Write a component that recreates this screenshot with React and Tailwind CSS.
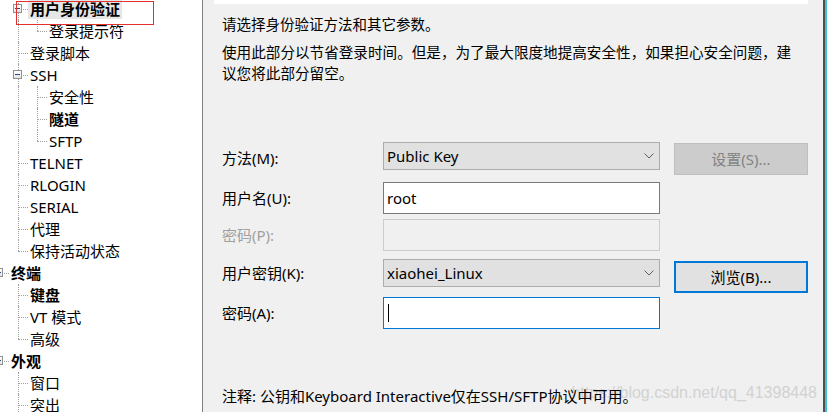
import React from "react";

const TREE = [
  { level: 1, text: "用户身份验证", bold: true, sel: true, exp: true, guides: [true] },
  { level: 2, text: "登录提示符", guides: [true, true], last: true },
  { level: 1, text: "登录脚本", guides: [true] },
  { level: 1, text: "SSH", exp: true, guides: [true] },
  { level: 2, text: "安全性", guides: [true, true] },
  { level: 2, text: "隧道", bold: true, guides: [true, true] },
  { level: 2, text: "SFTP", guides: [true, true], last: true },
  { level: 1, text: "TELNET", guides: [true] },
  { level: 1, text: "RLOGIN", guides: [true] },
  { level: 1, text: "SERIAL", guides: [true] },
  { level: 1, text: "代理", guides: [true] },
  { level: 1, text: "保持活动状态", guides: [true], last: true },
  { level: 0, text: "终端", bold: true, exp: true, guides: [] },
  { level: 1, text: "键盘", bold: true, guides: [true] },
  { level: 1, text: "VT 模式", guides: [true] },
  { level: 1, text: "高级", guides: [true], last: true },
  { level: 0, text: "外观", bold: true, exp: true, guides: [] },
  { level: 1, text: "窗口", guides: [true] },
  { level: 1, text: "突出", guides: [true] },
];

const TreeRow = ({ item }) => (
  <div className="flex h-[22px] items-center">
    {item.guides.map((g, i) => (
      <div key={i} className="relative h-full w-[19px] shrink-0">
        {g && (
          <div className="absolute left-[9px] top-0 h-full border-l border-dotted border-[#a0a0a0]" />
        )}
      </div>
    ))}
    <div className="relative h-full w-[19px] shrink-0">
      <div
        className={
          item.last
            ? "absolute left-[9px] top-0 h-1/2 border-l border-dotted border-[#a0a0a0]"
            : "absolute left-[9px] top-0 h-full border-l border-dotted border-[#a0a0a0]"
        }
      />
      <div className="absolute left-[9px] top-1/2 w-[10px] border-t border-dotted border-[#a0a0a0]" />
      {item.exp && (
        <div className="absolute left-[4px] top-[6px] flex h-[9px] w-[9px] items-center justify-center border border-[#919191] bg-gradient-to-b from-white to-[#e4e4e4]">
          <div className="h-px w-[5px] bg-[#2c4a7c]" />
        </div>
      )}
    </div>
    <span
      className={
        "whitespace-nowrap px-[2px] leading-[20px] text-black " +
        (item.bold ? "font-bold " : "") +
        (item.sel ? "bg-[#e6e6e6]" : "")
      }
    >
      {item.text}
    </span>
  </div>
);

const Chevron = () => (
  <svg width="10" height="6" viewBox="0 0 10 6" className="shrink-0">
    <path d="M0.5 0.5 L5 5 L9.5 0.5" fill="none" stroke="#606060" strokeWidth="1" />
  </svg>
);

const Label = ({ children, gray, h }) => (
  <div
    className={
      "flex w-[161px] shrink-0 items-center " +
      h +
      (gray ? " text-[#a0a0a0]" : " text-black")
    }
  >
    {children}
  </div>
);

export default function App() {
  return (
    <div className="flex h-[412px] w-[827px] overflow-hidden bg-white font-['Noto_Sans','Noto_Sans_CJK_SC',sans-serif] text-[15px]">
      {/* left tree */}
      <div className="relative w-[202px] shrink-0 overflow-hidden bg-white">
        <div className="-ml-[10px] -mt-[2px] flex flex-col">
          {TREE.map((item, i) => (
            <TreeRow key={i} item={item} />
          ))}
        </div>
        <div className="absolute left-[16px] top-[1px] h-[24px] w-[138px] border border-[#e3312f]" />
      </div>
      <div className="w-px shrink-0 bg-[#7f7f7f]" />

      {/* right panel */}
      <div className="relative flex w-[620px] shrink-0 flex-col bg-[#f0f0f0] pl-[19px]">
        <div className="-ml-[8px] h-[4px] w-[594px] bg-white" />
        <p className="mt-[10px] whitespace-nowrap text-[14.5px] leading-[21px] text-black">
          请选择身份验证方法和其它参数。
        </p>
        <p className="mt-[7px] whitespace-nowrap text-[14.6px] leading-[21px] text-black">
          使用此部分以节省登录时间。但是，为了最大限度地提高安全性，如果担心安全问题，建
          <br />
          议您将此部分留空。
        </p>

        <div className="mt-[58px] flex flex-col">
          <div className="flex h-[33px] items-start">
            <Label h="h-[32px]">方法(M):</Label>
            <div className="flex h-[28px] w-[277px] items-center justify-between border border-[#adadad] bg-[#e1e1e1] pl-[3px] pr-[5px]">
              <span>Public Key</span>
              <Chevron />
            </div>
            <div className="ml-[14px] mt-[1px] flex h-[32px] w-[134px] items-center justify-center border border-[#bfbfbf] bg-[#cccccc] text-[#838383]">
              设置(S)...
            </div>
          </div>

          <div className="mt-[7px] flex h-[32px] items-center">
            <Label h="h-[32px]">用户名(U):</Label>
            <div className="flex h-[32px] w-[277px] items-center border border-[#7a7a7a] bg-white pl-[3px]">
              root
            </div>
          </div>

          <div className="mt-[5px] flex h-[32px] items-center">
            <Label h="h-[32px]" gray>
              密码(P):
            </Label>
            <div className="h-[32px] w-[277px] border border-[#cccccc] bg-[#f0f0f0]" />
          </div>

          <div className="mt-[8px] flex h-[34px] items-start">
            <Label h="h-[28px]">用户密钥(K):</Label>
            <div className="flex h-[28px] w-[277px] items-center justify-between border border-[#adadad] bg-[#e1e1e1] pl-[3px] pr-[5px]">
              <span>xiaohei_Linux</span>
              <Chevron />
            </div>
            <div className="ml-[14px] mt-[2px] flex h-[32px] w-[134px] items-center justify-center border-2 border-[#0078d7] bg-[#e1e1e1] text-black">
              浏览(B)...
            </div>
          </div>

          <div className="mt-[4px] flex h-[32px] items-center">
            <Label h="h-[32px]">密码(A):</Label>
            <div className="flex h-[32px] w-[277px] items-center border border-[#0078d7] bg-white pl-[4px]">
              <div className="h-[18px] w-px bg-black" />
            </div>
          </div>
        </div>

        <div className="absolute right-[6px] top-[384px] whitespace-nowrap font-['Liberation_Sans',sans-serif] text-[16px] leading-[18px] text-[#d2d2d2]">
          https://blog.csdn.net/qq_41398448
        </div>
        <p className="relative mt-[57px] whitespace-nowrap leading-[21px] text-black">
          注释: 公钥和Keyboard Interactive仅在SSH/SFTP协议中可用。
        </p>
      </div>

      <div className="w-[2px] shrink-0 bg-[#505050]" />
      <div className="w-[2px] shrink-0 bg-[#3fc3d0]" />
    </div>
  );
}
